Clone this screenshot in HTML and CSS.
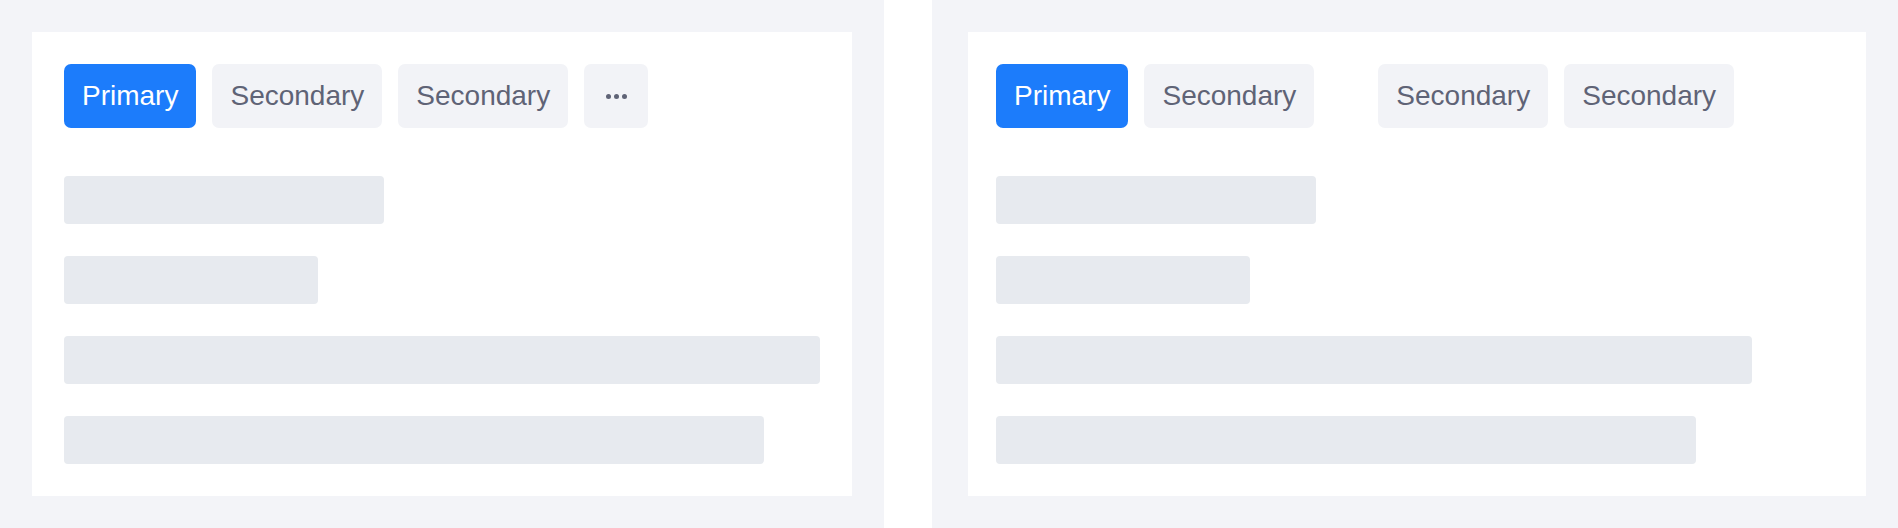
FILE: index.html
```html
<!DOCTYPE html>
<html lang="en">
<head>
<meta charset="utf-8">
<title>Tabs overflow</title>
<link rel="stylesheet" href="styles.css">
</head>
<body>
<div class="page">
  <section class="panel panel-left">
    <div class="card card-left">
      <div class="tabs">
        <button class="tab tab-primary">Primary</button>
        <button class="tab">Secondary</button>
        <button class="tab">Secondary</button>
        <button class="tab tab-more" aria-label="More"><span class="dot"></span><span class="dot"></span><span class="dot"></span></button>
      </div>
      <div class="skeleton">
        <div class="bar bar-1"></div>
        <div class="bar bar-2"></div>
        <div class="bar bar-3"></div>
        <div class="bar bar-4"></div>
      </div>
    </div>
  </section>
  <section class="panel panel-right">
    <div class="card card-right">
      <div class="tabs">
        <button class="tab tab-primary">Primary</button>
        <button class="tab">Secondary</button>
        <span class="tab-spacer"></span>
        <button class="tab">Secondary</button>
        <button class="tab">Secondary</button>
      </div>
      <div class="skeleton">
        <div class="bar bar-1"></div>
        <div class="bar bar-2"></div>
        <div class="bar bar-3"></div>
        <div class="bar bar-4"></div>
      </div>
    </div>
  </section>
</div>
</body>
</html>
```
FILE: styles.css
```css
html, body {
  margin: 0;
  padding: 0;
  background: #ffffff;
}

body {
  font-family: "Liberation Sans", Arial, sans-serif;
}

.page {
  display: flex;
  gap: 48px;
  height: 528px;
}

.panel {
  background: #f3f4f8;
  box-sizing: border-box;
  display: flex;
}

.panel-left {
  width: 884px;
  padding: 32px;
}

.panel-right {
  flex: 1;
  padding: 32px 32px 32px 36px;
}

.card {
  flex: 1;
  background: #ffffff;
  box-sizing: border-box;
  display: flex;
  flex-direction: column;
  gap: 48px;
}

.card-left {
  padding: 32px;
}

.card-right {
  padding: 32px 32px 32px 28px;
}

.tabs {
  display: flex;
  gap: 16px;
  height: 64px;
}

.tab {
  height: 64px;
  padding: 0 18px;
  border: 0;
  border-radius: 7px;
  background: #f2f3f7;
  color: #5f6376;
  font-family: inherit;
  font-size: 28px;
  line-height: 64px;
  display: flex;
  align-items: center;
  justify-content: center;
  cursor: pointer;
}

.tab-primary {
  background: #1c7cfb;
  color: #ffffff;
}

.tab-more {
  width: 64px;
  padding: 0;
  gap: 3px;
}

.dot {
  width: 5px;
  height: 5px;
  border-radius: 50%;
  background: #5f6376;
}

.tab-spacer {
  width: 32px;
}

.skeleton {
  display: flex;
  flex-direction: column;
  gap: 32px;
}

.bar {
  height: 48px;
  border-radius: 4px;
  background: #e7eaef;
}

.bar-1 { width: 320px; }
.bar-2 { width: 254px; }
.bar-3 { width: 756px; }
.bar-4 { width: 700px; }
```
